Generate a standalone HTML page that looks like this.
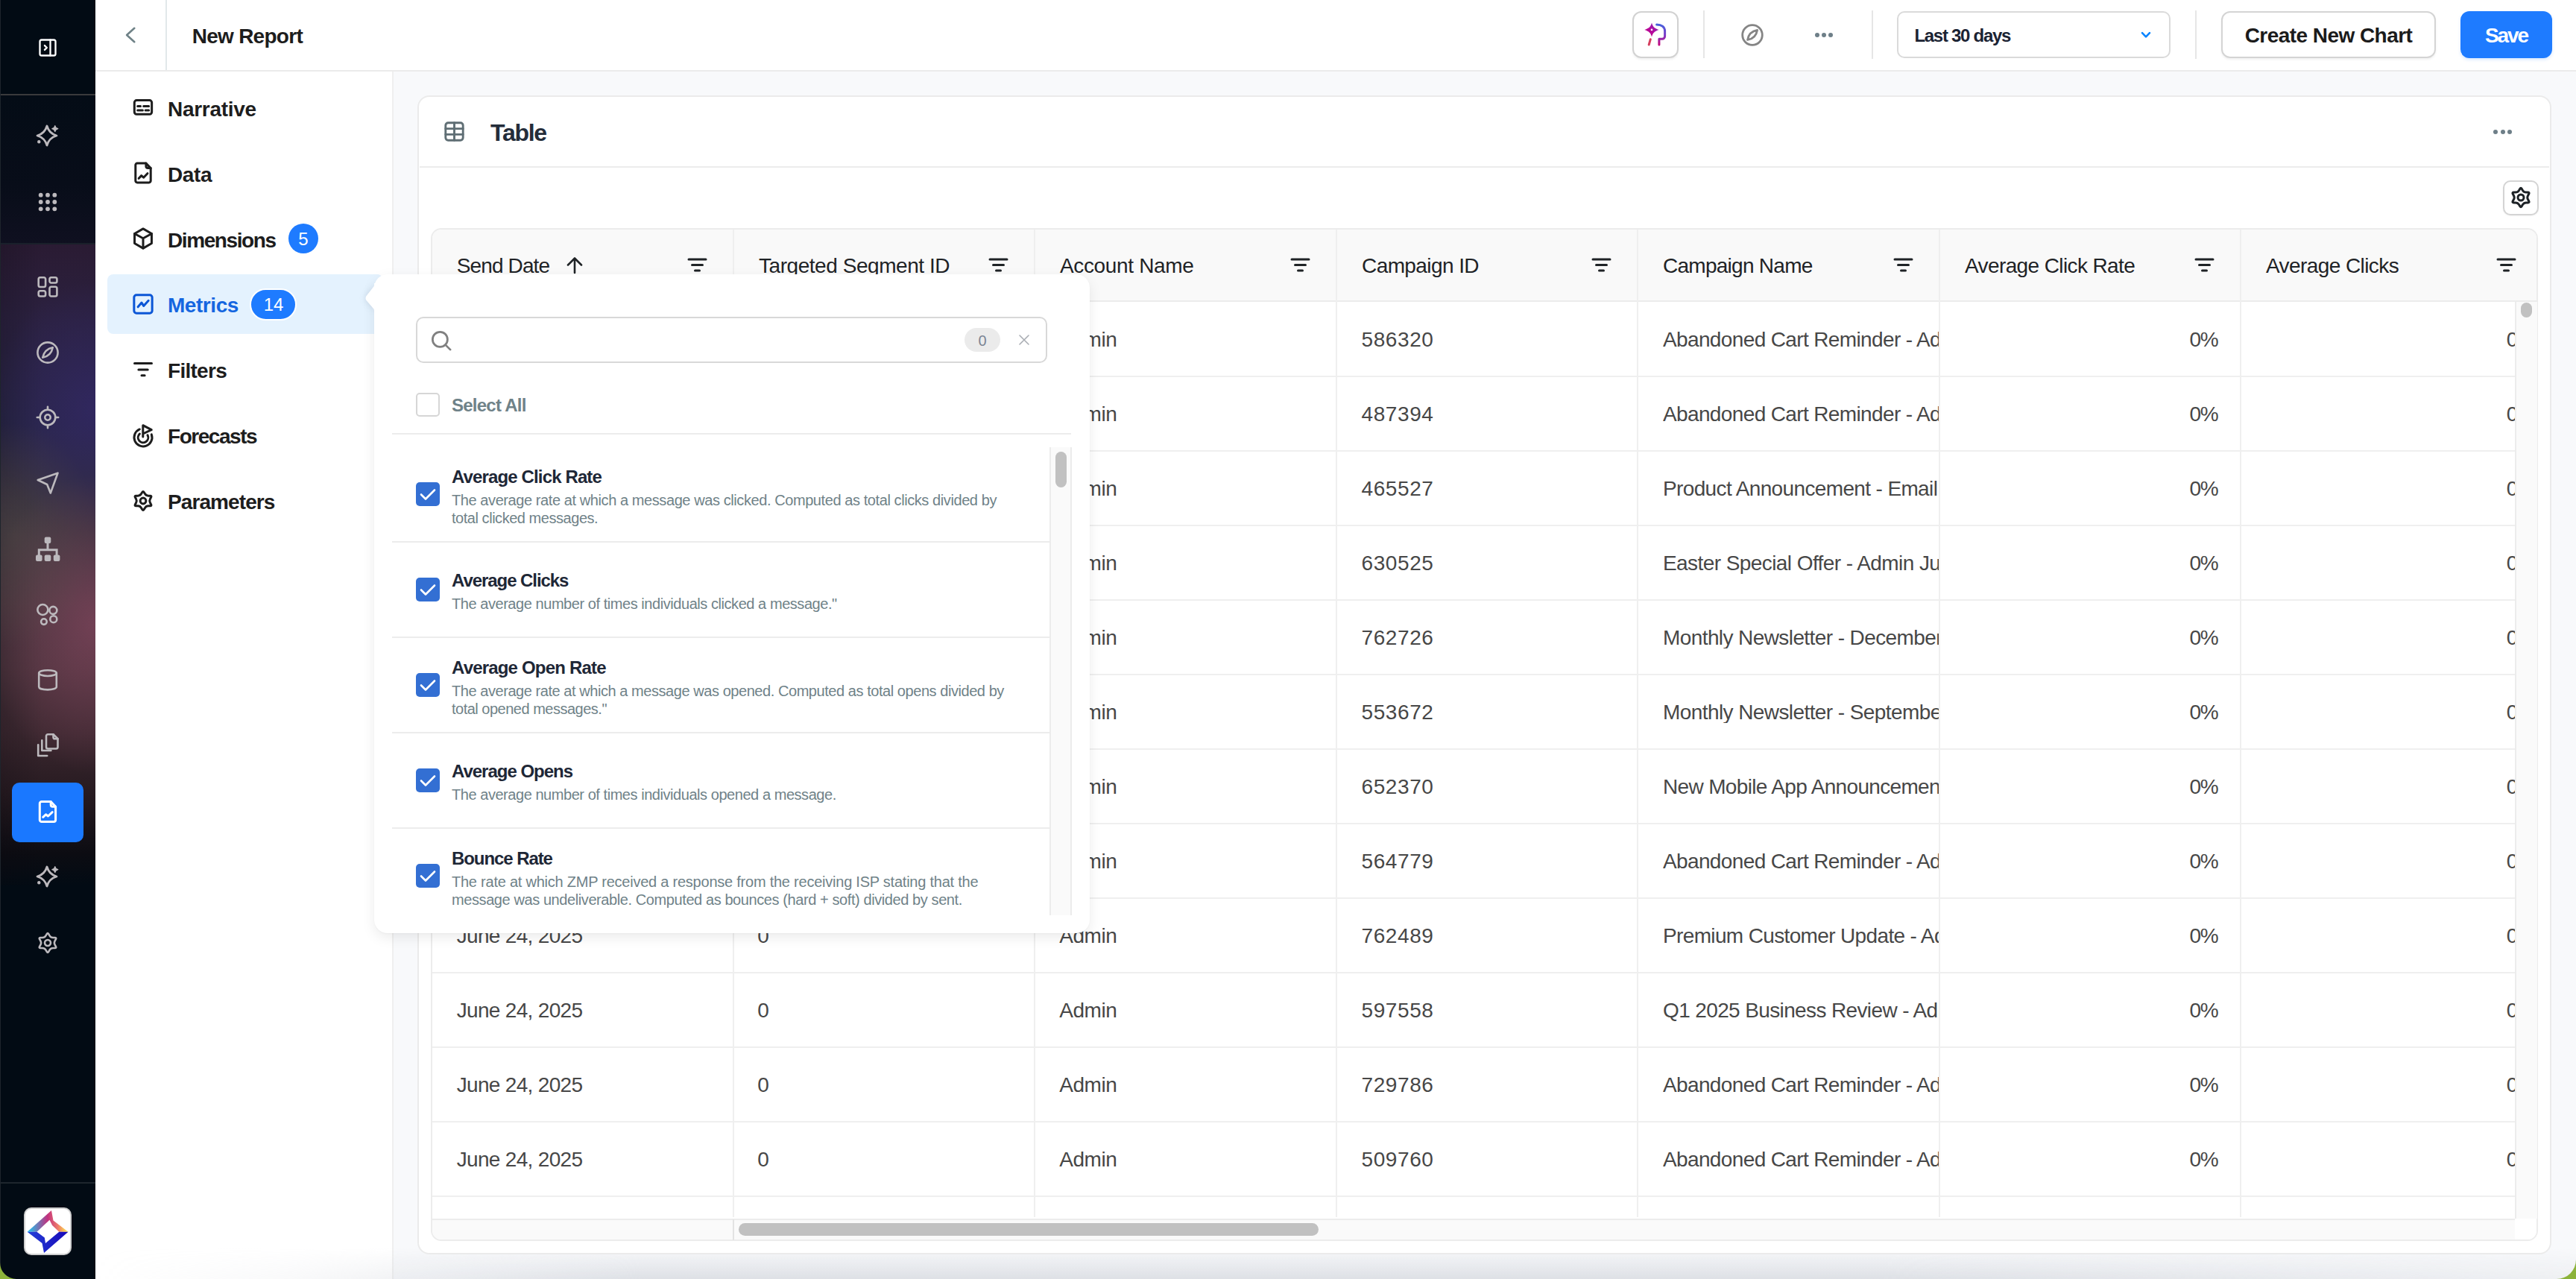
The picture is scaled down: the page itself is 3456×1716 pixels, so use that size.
<!DOCTYPE html>
<html><head><meta charset="utf-8"><title>New Report</title>
<style>
html,body{margin:0;padding:0;}
body{width:3456px;height:1716px;position:relative;overflow:hidden;background:#fff;font-family:"Liberation Sans",sans-serif;}
.t{position:absolute;white-space:nowrap;line-height:1;}
svg{overflow:visible;}
</style></head><body>
<div style="position:absolute;left:0px;top:0px;width:128px;height:1716px;background:#020b14;"></div>
<div style="position:absolute;left:0px;top:128px;width:128px;height:200px;background:linear-gradient(180deg,#040c16 0%,#080d19 60%,#0f1020 100%);"></div>
<div style="position:absolute;left:0px;top:328px;width:128px;height:860px;background:radial-gradient(ellipse 110px 150px at 20px 390px, rgba(95,82,75,0.45), rgba(95,82,75,0) 100%),radial-gradient(ellipse 150px 200px at 128px 510px, rgba(128,68,92,0.75), rgba(128,68,92,0) 100%),radial-gradient(ellipse 140px 170px at 128px 220px, rgba(52,40,105,0.7), rgba(52,40,105,0) 100%),linear-gradient(90deg, rgba(10,8,14,0.22) 0%, rgba(10,8,14,0) 45%),linear-gradient(180deg,#2a1b33 0%,#2b2140 12%,#282646 28%,#35303e 44%,#45363e 56%,#47323a 66%,#3c2830 76%,#261a20 86%,#0c0c12 95%,#020b14 100%);"></div>
<div style="position:absolute;left:0px;top:126px;width:128px;height:2px;background:#3a3a3c;"></div>
<div style="position:absolute;left:0px;top:326px;width:128px;height:2px;background:#1a202b;"></div>
<div style="position:absolute;left:0px;top:0px;width:1px;height:1716px;background:#1e252c;"></div>
<div style="position:absolute;left:0px;top:1586px;width:128px;height:2px;background:#1e262d;"></div>
<svg style="position:absolute;left:0px;top:1694px" width="22" height="22" viewBox="0 0 22 22"><path d="M0 0 V22 H22 A22 22 0 0 1 0 0Z" fill="#8cb33a"/></svg>
<svg style="position:absolute;left:50px;top:50px;" width="28" height="28" viewBox="0 0 24 24" fill="none" stroke="#ffffff" stroke-width="2" stroke-linecap="round" stroke-linejoin="round"><rect x="3" y="3" width="18" height="18" rx="2"/><path d="M15 3v18"/><path d="M8.5 9.5l2.5 2.5l-2.5 2.5"/></svg>
<svg style="position:absolute;left:43.3px;top:162px" width="40" height="40" viewBox="-20 -20 40 40" fill="none" stroke="#bcb9bd" stroke-width="2.8" stroke-linecap="round" stroke-linejoin="round"><path d="M0,-13 Q2.9,-2.9 13,0 Q2.9,2.9 0,13 Q-2.9,2.9 -13,0 Q-2.9,-2.9 0,-13Z"/><path d="M10.8,-13.3 Q11.4,-9.9 14.8,-9.3 Q11.4,-8.7 10.8,-5.3 Q10.2,-8.7 6.8,-9.3 Q10.2,-9.9 10.8,-13.3Z" fill="#bcb9bd" stroke-width="1.2"/><circle cx="-10.7" cy="8.2" r="1.6" fill="#bcb9bd" stroke-width="1.2"/></svg>
<svg style="position:absolute;left:43.9px;top:250.60000000000002px" width="40" height="40" viewBox="-20 -20 40 40" fill="none" stroke="#000" stroke-width="2.6" stroke-linecap="round" stroke-linejoin="round"><circle cx="-9.3" cy="-9.3" r="2.9" fill="#bcb9bd" stroke="none"/><circle cx="-9.3" cy="0" r="2.9" fill="#bcb9bd" stroke="none"/><circle cx="-9.3" cy="9.3" r="2.9" fill="#bcb9bd" stroke="none"/><circle cx="0" cy="-9.3" r="2.9" fill="#bcb9bd" stroke="none"/><circle cx="0" cy="0" r="2.9" fill="#bcb9bd" stroke="none"/><circle cx="0" cy="9.3" r="2.9" fill="#bcb9bd" stroke="none"/><circle cx="9.3" cy="-9.3" r="2.9" fill="#bcb9bd" stroke="none"/><circle cx="9.3" cy="0" r="2.9" fill="#bcb9bd" stroke="none"/><circle cx="9.3" cy="9.3" r="2.9" fill="#bcb9bd" stroke="none"/></svg>
<svg style="position:absolute;left:44px;top:365px" width="40" height="40" viewBox="-20 -20 40 40" fill="none" stroke="#bcb9bd" stroke-width="2.6" stroke-linecap="round" stroke-linejoin="round"><rect x="-12.3" y="-12.8" width="9.4" height="12.8" rx="2.2"/><rect x="2.5" y="-12.8" width="9.9" height="7.3" rx="2.2"/><rect x="-12.3" y="5.3" width="9.4" height="7.2" rx="2.2"/><rect x="2.5" y="-0.2" width="9.9" height="12.7" rx="2.2"/></svg>
<svg style="position:absolute;left:44px;top:453px" width="40" height="40" viewBox="-20 -20 40 40" fill="none" stroke="#bcb9bd" stroke-width="2.6" stroke-linecap="round" stroke-linejoin="round"><circle cx="0" cy="0" r="13.6"/><path d="M-6.8,6.8 Q-4.5,-4.5 6.8,-6.8 Q4.5,4.5 -6.8,6.8Z"/></svg>
<svg style="position:absolute;left:44px;top:540px" width="40" height="40" viewBox="-20 -20 40 40" fill="none" stroke="#bcb9bd" stroke-width="2.6" stroke-linecap="round" stroke-linejoin="round"><circle cx="0" cy="0" r="3.7"/><circle cx="0" cy="0" r="10.3"/><path d="M0,-14.2v3.5M0,10.7v3.5M-14.2,0h3.5M10.7,0h3.5"/></svg>
<svg style="position:absolute;left:44px;top:628px" width="40" height="40" viewBox="-20 -20 40 40" fill="none" stroke="#bcb9bd" stroke-width="2.6" stroke-linecap="round" stroke-linejoin="round"><path d="M-13.3,-4 L13.5,-13.3 L3.8,13.5 L-0.8,2 Z"/></svg>
<svg style="position:absolute;left:44px;top:717px" width="40" height="40" viewBox="-20 -20 40 40" fill="none" stroke="#bcb9bd" stroke-width="2.6" stroke-linecap="round" stroke-linejoin="round"><rect x="-4.3" y="-16.6" width="8.6" height="8.6" rx="2" fill="#bcb9bd" stroke="none"/><rect x="-16" y="7.5" width="8.6" height="8.6" rx="2" fill="#bcb9bd" stroke="none"/><rect x="-4.3" y="7.5" width="8.6" height="8.6" rx="2" fill="#bcb9bd" stroke="none"/><rect x="7.8" y="7.5" width="8.6" height="8.6" rx="2" fill="#bcb9bd" stroke="none"/><path d="M0,-9v10M-11.7,8v-7.2H12.1V8" stroke-width="3" stroke-linecap="butt" stroke-linejoin="miter"/></svg>
<svg style="position:absolute;left:44px;top:804px" width="40" height="40" viewBox="-20 -20 40 40" fill="none" stroke="#bcb9bd" stroke-width="2.6" stroke-linecap="round" stroke-linejoin="round"><circle cx="-6.65" cy="-6" r="7.0"/><circle cx="7.35" cy="-5.1" r="5.0"/><circle cx="-5.1" cy="10.1" r="3.8"/><circle cx="7.8" cy="6.7" r="4.5"/></svg>
<svg style="position:absolute;left:44px;top:892px" width="40" height="40" viewBox="-20 -20 40 40" fill="none" stroke="#bcb9bd" stroke-width="2.6" stroke-linecap="round" stroke-linejoin="round"><ellipse cx="0" cy="-8.9" rx="11.8" ry="3.9"/><path d="M-11.8,-8.9 V9.5 C-11.8,11.8 -6.5,13.4 0,13.4 C6.5,13.4 11.8,11.8 11.8,9.5 V-8.9"/></svg>
<svg style="position:absolute;left:44px;top:980px" width="40" height="40" viewBox="-20 -20 40 40" fill="none" stroke="#bcb9bd" stroke-width="2.6" stroke-linecap="round" stroke-linejoin="round"><path d="M-2,-12.5 A2.3,2.3 0 0 1 0.3,-14.8 H7.5 L13.5,-8.8 V2.2 A2.3,2.3 0 0 1 11.2,4.5 H0.3 A2.3,2.3 0 0 1 -2,2.2 Z"/><path d="M7.5,-14.8 V-11.1 A2.3,2.3 0 0 0 9.8,-8.8 H13.5"/><path d="M-7.7,-6.7 V7 H4.4"/><path d="M-12.8,-0.7 V14 H-0.8"/></svg>
<div style="position:absolute;left:16px;top:1050px;width:96px;height:80px;background:#1a78ff;border-radius:10px;"></div>
<svg style="position:absolute;left:44px;top:1069px" width="40" height="40" viewBox="-20 -20 40 40" fill="none" stroke="#ffffff" stroke-width="3" stroke-linecap="round" stroke-linejoin="round"><path d="M-10.7,-11 A2.5,2.5 0 0 1 -8.2,-13.5 H4.2 L10.6,-6.8 V11 A2.5,2.5 0 0 1 8.1,13.5 H-8.2 A2.5,2.5 0 0 1 -10.7,11 Z"/><path d="M4.2,-13.5 V-9.2 A2.4,2.4 0 0 0 6.6,-6.8 H10.6"/><path d="M-6.3,7.3 L-2.5,3.8 L0.5,6 L6.2,0.6"/></svg>
<svg style="position:absolute;left:43.3px;top:1156.3px" width="40" height="40" viewBox="-20 -20 40 40" fill="none" stroke="#bcb9bd" stroke-width="2.8" stroke-linecap="round" stroke-linejoin="round"><path d="M0,-13 Q2.9,-2.9 13,0 Q2.9,2.9 0,13 Q-2.9,2.9 -13,0 Q-2.9,-2.9 0,-13Z"/><path d="M10.8,-13.3 Q11.4,-9.9 14.8,-9.3 Q11.4,-8.7 10.8,-5.3 Q10.2,-8.7 6.8,-9.3 Q10.2,-9.9 10.8,-13.3Z" fill="#bcb9bd" stroke-width="1.2"/><circle cx="-10.7" cy="8.2" r="1.6" fill="#bcb9bd" stroke-width="1.2"/></svg>
<svg style="position:absolute;left:43.9px;top:1244.7px" width="40" height="40" viewBox="-20 -20 40 40" fill="none" stroke="#bcb9bd" stroke-width="2.6" stroke-linecap="round" stroke-linejoin="round"><path d="M-1.23,-11.83 Q0.00,-13.86 1.23,-11.83 L2.54,-9.66 Q4.09,-7.09 7.10,-7.03 L9.63,-6.98 Q12.00,-6.93 10.86,-4.85 L9.64,-2.63 Q8.19,0.00 9.64,2.63 L10.86,4.85 Q12.00,6.93 9.63,6.98 L7.10,7.03 Q4.09,7.09 2.54,9.66 L1.23,11.83 Q0.00,13.86 -1.23,11.83 L-2.54,9.66 Q-4.09,7.09 -7.10,7.03 L-9.63,6.98 Q-12.00,6.93 -10.86,4.85 L-9.64,2.63 Q-8.19,0.00 -9.64,-2.63 L-10.86,-4.85 Q-12.00,-6.93 -9.63,-6.98 L-7.10,-7.03 Q-4.09,-7.09 -2.54,-9.66 Z"/><circle cx="0" cy="0" r="4.0"/></svg>
<div style="position:absolute;left:32px;top:1620px;width:64px;height:64px;background:#fff;border:2px solid #cfcfcf;border-radius:10px;box-sizing:border-box;"></div>
<svg style="position:absolute;left:32px;top:1620px" width="64" height="64" viewBox="32 1620 64 64">
<defs><linearGradient id="lg1" gradientUnits="userSpaceOnUse" x1="37" y1="0" x2="91" y2="0"><stop offset="0" stop-color="#18c8f4"/><stop offset=".5" stop-color="#c2307e"/><stop offset=".75" stop-color="#ee7a6a"/><stop offset="1" stop-color="#fff24a"/></linearGradient>
<linearGradient id="lg2" gradientUnits="userSpaceOnUse" x1="37" y1="0" x2="91" y2="0"><stop offset="0" stop-color="#2440d8"/><stop offset="1" stop-color="#1808b8"/></linearGradient></defs>
<path d="M36.6 1652.7 L69 1624 L71.5 1637.5 L91.5 1652.7 L79.3 1652.7 L70.1 1644 L66.5 1636.8 L49.4 1652.7 Z" fill="url(#lg1)"/>
<path d="M36.6 1652.7 L49.4 1652.7 L59.8 1660.5 L61 1668 L79.3 1652.7 L91.5 1652.7 L59 1681 L56.5 1668 Z" fill="url(#lg2)"/>
</svg>
<div style="position:absolute;left:128px;top:0px;width:3328px;height:94px;background:#ffffff;"></div>
<div style="position:absolute;left:128px;top:94px;width:3328px;height:2px;background:#ebebeb;"></div>
<div style="position:absolute;left:222px;top:0px;width:2px;height:94px;background:#e2e8ea;"></div>
<svg style="position:absolute;left:155px;top:27px" width="40" height="40" viewBox="-20 -20 40 40" fill="none" stroke="#6f8287" stroke-width="2.6" stroke-linecap="round" stroke-linejoin="round"><path d="M5.3,-9.2 L-4.9,0 L5.3,9.2"/></svg>
<span class="t" style="left:257.70px;top:34.50px;font-size:28px;font-weight:700;color:#1d1d1d;letter-spacing:-0.728px;">New Report</span>
<div style="position:absolute;left:2190px;top:15px;width:62px;height:63px;background:#fff;border:2px solid #d2d2d2;border-radius:12px;box-sizing:border-box;box-shadow:0 2px 3px rgba(0,0,0,0.06);"></div>
<svg style="position:absolute;left:2195px;top:20px" width="52" height="52" viewBox="2195 20 52 52">
<defs><linearGradient id="aig" x1="1" y1="0" x2="0" y2="1"><stop offset="0" stop-color="#7c30c0"/><stop offset=".55" stop-color="#b6089c"/><stop offset="1" stop-color="#c0067f"/></linearGradient>
<linearGradient id="aig2" x1="0" y1="0" x2="0" y2="1"><stop offset="0" stop-color="#4860dc"/><stop offset=".5" stop-color="#7a3cc8"/><stop offset="1" stop-color="#c4067c"/></linearGradient></defs>
<path d="M2216 30.4 C2217.3 35.5 2219.5 37.8 2225.5 39.9 C2219.5 42 2217.3 44.3 2216 49.5 C2214.7 44.3 2212.5 42 2206.3 39.9 C2212.5 37.8 2214.7 35.5 2216 30.4Z" fill="url(#aig)"/>
<circle cx="2216" cy="39.9" r="1.3" fill="#fff"/>
<path d="M2222.6 33 C2229 33 2233.6 36 2233.6 42 V48.5 C2233.6 50.5 2232 52.3 2230 52.3 H2225.9 V60" fill="none" stroke="url(#aig2)" stroke-width="3" stroke-linecap="round" stroke-linejoin="round"/>
<path d="M2214.3 52.7 L2212.2 60" stroke="#d6405f" stroke-width="3" stroke-linecap="round"/>
</svg>
<div style="position:absolute;left:2285px;top:14px;width:2px;height:64px;background:#e6e6e6;"></div>
<svg style="position:absolute;left:2330.9px;top:26.9px" width="40" height="40" viewBox="-20 -20 40 40" fill="none" stroke="#858585" stroke-width="2.8" stroke-linecap="round" stroke-linejoin="round"><circle cx="0" cy="0" r="13.3"/><path d="M-6.4,6.4 Q-4.6,-4.6 6.6,-6.6 Q4.6,4.6 -6.4,6.4Z"/></svg>
<div style="position:absolute;left:2434.5px;top:44px;width:6px;height:6px;background:#6e7f88;border-radius:50%;"></div>
<div style="position:absolute;left:2443.8px;top:44px;width:6px;height:6px;background:#6e7f88;border-radius:50%;"></div>
<div style="position:absolute;left:2453.2px;top:44px;width:6px;height:6px;background:#6e7f88;border-radius:50%;"></div>
<div style="position:absolute;left:2511px;top:14px;width:2px;height:65px;background:#e6e6e6;"></div>
<div style="position:absolute;left:2545px;top:15px;width:367px;height:63px;background:#fff;border:2px solid #dadada;border-radius:10px;box-sizing:border-box;"></div>
<span class="t" style="left:2568.40px;top:35.58px;font-size:24px;font-weight:700;color:#1b2333;letter-spacing:-1.283px;">Last 30 days</span>
<svg style="position:absolute;left:2870px;top:38px;" width="18" height="18" viewBox="0 0 18 18" fill="none" stroke="#0a84ff" stroke-width="2.6" stroke-linecap="round" stroke-linejoin="round"><path d="M4 6.2L9 11.3L14 6.2"/></svg>
<div style="position:absolute;left:2945px;top:14px;width:2px;height:65px;background:#e6e6e6;"></div>
<div style="position:absolute;left:2980px;top:15px;width:288px;height:63px;background:#fff;border:2px solid #d4d4d4;border-radius:12px;box-sizing:border-box;box-shadow:0 2px 3px rgba(0,0,0,0.06);"></div>
<span class="t" style="left:3011.70px;top:33.60px;font-size:28px;font-weight:700;color:#1b1b1b;letter-spacing:-0.550px;">Create New Chart</span>
<div style="position:absolute;left:3301px;top:15px;width:123px;height:63px;background:#1e7bff;border-radius:12px;box-shadow:0 2px 4px rgba(30,123,255,0.18);"></div>
<span class="t" style="left:3334.00px;top:33.60px;font-size:28px;font-weight:700;color:#ffffff;letter-spacing:-2.102px;">Save</span>
<div style="position:absolute;left:128px;top:96px;width:399px;height:1620px;background:#ffffff;"></div>
<div style="position:absolute;left:526px;top:96px;width:2px;height:1620px;background:#efefef;"></div>
<div style="position:absolute;left:144px;top:368px;width:370px;height:80px;background:#e4f2fe;border-radius:8px;"></div>
<svg style="position:absolute;left:172px;top:123.9px" width="40" height="40" viewBox="-20 -20 40 40" fill="none" stroke="#1d1d1d" stroke-width="3" stroke-linecap="round" stroke-linejoin="round"><rect x="-11.7" y="-9.4" width="23.35" height="18.75" rx="3"/><path d="M-7.35,-1.4h3.85M0.65,-1.4h7M-7.35,4.1h6.75M3.15,4.1h4.5"/></svg>
<span class="t" style="left:225.00px;top:132.80px;font-size:28px;font-weight:700;color:#1d1d1d;letter-spacing:-0.278px;">Narrative</span>
<svg style="position:absolute;left:172px;top:211.7px" width="40" height="40" viewBox="-20 -20 40 40" fill="none" stroke="#1d1d1d" stroke-width="3" stroke-linecap="round" stroke-linejoin="round"><path d="M-10.2,-10.6 A2.3,2.3 0 0 1 -7.9,-12.9 H3.9 L10.2,-6.4 V10.6 A2.3,2.3 0 0 1 7.9,12.9 H-7.9 A2.3,2.3 0 0 1 -10.2,10.6 Z"/><path d="M3.9,-12.9 V-8.7 A2.3,2.3 0 0 0 6.2,-6.4 H10.2"/><path d="M-5.8,7.3 L-2.3,3.6 L0.6,6.2 L5.9,0.7"/></svg>
<span class="t" style="left:225.00px;top:220.80px;font-size:28px;font-weight:700;color:#1d1d1d;letter-spacing:-0.376px;">Data</span>
<svg style="position:absolute;left:172px;top:300px" width="40" height="40" viewBox="-20 -20 40 40" fill="none" stroke="#1d1d1d" stroke-width="3" stroke-linecap="round" stroke-linejoin="round"><path d="M0,-13.1 L11.45,-6.5 V6.5 L0,13.1 L-11.45,6.5 V-6.5 Z"/><path d="M-11.45,-6.5 L0,-0.3 L11.45,-6.5 M0,-0.3 V13.1"/></svg>
<span class="t" style="left:225.00px;top:308.80px;font-size:28px;font-weight:700;color:#1d1d1d;letter-spacing:-1.400px;">Dimensions</span>
<svg style="position:absolute;left:172px;top:388px" width="40" height="40" viewBox="-20 -20 40 40" fill="none" stroke="#0b56d6" stroke-width="3" stroke-linecap="round" stroke-linejoin="round"><rect x="-12.15" y="-12.25" width="24.3" height="24.5" rx="3.2"/><path d="M-6.9,3.8 L-2,-1.9 L0.7,2.4 L7.2,-4.7"/></svg>
<span class="t" style="left:225.00px;top:395.80px;font-size:28px;font-weight:700;color:#1466e0;letter-spacing:-0.450px;">Metrics</span>
<svg style="position:absolute;left:172px;top:476px" width="40" height="40" viewBox="-20 -20 40 40" fill="none" stroke="#1d1d1d" stroke-width="3" stroke-linecap="round" stroke-linejoin="round"><path d="M-11.5,-8.4h23M-6.1,0h12.3M-2,7.8h4.1"/></svg>
<span class="t" style="left:225.00px;top:483.80px;font-size:28px;font-weight:700;color:#1d1d1d;letter-spacing:-0.719px;">Filters</span>
<svg style="position:absolute;left:172px;top:566.5px" width="40" height="40" viewBox="-20 -20 40 40" fill="none" stroke="#1d1d1d" stroke-width="3" stroke-linecap="round" stroke-linejoin="round"><path d="M-4.69,-11.05 A12,12 0 1 0 11.28,-4.10"/><path d="M-4.64,-4.97 A6.8,6.8 0 1 0 6.00,-3.19"/><path d="M-0.2,-0.9 V-16.3 L11.2,-10.3 L-0.2,-5"/></svg>
<span class="t" style="left:225.00px;top:571.80px;font-size:28px;font-weight:700;color:#1d1d1d;letter-spacing:-1.455px;">Forecasts</span>
<svg style="position:absolute;left:172px;top:651.5px" width="40" height="40" viewBox="-20 -20 40 40" fill="none" stroke="#1d1d1d" stroke-width="3" stroke-linecap="round" stroke-linejoin="round"><path d="M-1.20,-11.55 Q0.00,-13.53 1.20,-11.55 L2.48,-9.44 Q4.00,-6.93 6.93,-6.87 L9.40,-6.82 Q11.72,-6.76 10.60,-4.74 L9.42,-2.57 Q8.00,0.00 9.42,2.57 L10.60,4.74 Q11.72,6.76 9.40,6.82 L6.93,6.87 Q4.00,6.93 2.48,9.44 L1.20,11.55 Q0.00,13.53 -1.20,11.55 L-2.48,9.44 Q-4.00,6.93 -6.93,6.87 L-9.40,6.82 Q-11.72,6.76 -10.60,4.74 L-9.42,2.57 Q-8.00,0.00 -9.42,-2.57 L-10.60,-4.74 Q-11.72,-6.77 -9.40,-6.82 L-6.93,-6.87 Q-4.00,-6.93 -2.48,-9.44 Z"/><circle cx="0" cy="0" r="3.9"/></svg>
<span class="t" style="left:225.00px;top:659.80px;font-size:28px;font-weight:700;color:#1d1d1d;letter-spacing:-0.906px;">Parameters</span>
<div style="position:absolute;left:387px;top:300px;width:40px;height:40px;background:#1e7bff;border-radius:50%;"></div>
<span class="t" style="left:400.32px;top:309.18px;font-size:24px;font-weight:400;color:#ffffff;letter-spacing:0.000px;">5</span>
<div style="position:absolute;left:334.5px;top:386.5px;width:63px;height:43px;background:#1e7bff;border-radius:21.5px;border:2px solid #ffffff;box-sizing:border-box;"></div>
<span class="t" style="left:353.65px;top:396.68px;font-size:24px;font-weight:400;color:#ffffff;letter-spacing:0.000px;">14</span>
<div style="position:absolute;left:528px;top:96px;width:2928px;height:1620px;background:#f8f9fb;"></div>
<div style="position:absolute;left:128px;top:1640px;width:3328px;height:76px;background:linear-gradient(180deg,rgba(200,204,212,0) 0%,rgba(200,204,212,0) 45%,rgba(200,204,212,0.55) 100%);-webkit-mask-image:linear-gradient(90deg,rgba(0,0,0,0) 0%,rgba(0,0,0,0.2) 8%,rgba(0,0,0,1) 22%,rgba(0,0,0,1) 72%,rgba(0,0,0,0.35) 100%);"></div>
<div style="position:absolute;left:560px;top:128px;width:2863px;height:1555px;background:#fff;border:2px solid #ebebeb;border-radius:16px;box-sizing:border-box;"></div>
<div style="position:absolute;left:563px;top:223px;width:2857px;height:2px;background:#ececec;"></div>
<svg style="position:absolute;left:593px;top:160px;" width="33" height="33" viewBox="0 0 24 24" fill="none" stroke="#5f6e74" stroke-width="2.1" stroke-linecap="round" stroke-linejoin="round"><rect x="3.5" y="3.5" width="17" height="17" rx="2.5"/><path d="M3.5 9.2h17M3.5 14.8h17M12 3.5v17"/></svg>
<span class="t" style="left:658.10px;top:161.71px;font-size:32px;font-weight:700;color:#242d3a;letter-spacing:-1.321px;">Table</span>
<div style="position:absolute;left:3345px;top:174px;width:6px;height:6px;background:#6e7f88;border-radius:50%;"></div>
<div style="position:absolute;left:3354.5px;top:174px;width:6px;height:6px;background:#6e7f88;border-radius:50%;"></div>
<div style="position:absolute;left:3364px;top:174px;width:6px;height:6px;background:#6e7f88;border-radius:50%;"></div>
<div style="position:absolute;left:3358px;top:242px;width:48px;height:47px;background:#fff;border:2px solid #d4d4d4;border-radius:10px;box-sizing:border-box;box-shadow:0 1px 2px rgba(0,0,0,0.05);"></div>
<svg style="position:absolute;left:3362px;top:245.3px" width="40" height="40" viewBox="-20 -20 40 40" fill="none" stroke="#1d2226" stroke-width="3" stroke-linecap="round" stroke-linejoin="round"><path d="M-1.21,-11.65 Q0.00,-13.64 1.21,-11.65 L2.51,-9.53 Q4.05,-7.01 7.00,-6.94 L9.48,-6.88 Q11.81,-6.82 10.70,-4.77 L9.51,-2.59 Q8.10,0.00 9.51,2.59 L10.70,4.77 Q11.81,6.82 9.48,6.88 L7.00,6.94 Q4.05,7.01 2.51,9.53 L1.21,11.65 Q0.00,13.64 -1.21,11.65 L-2.51,9.53 Q-4.05,7.01 -7.00,6.94 L-9.48,6.88 Q-11.81,6.82 -10.70,4.77 L-9.51,2.59 Q-8.10,0.00 -9.51,-2.59 L-10.70,-4.77 Q-11.81,-6.82 -9.48,-6.88 L-7.00,-6.94 Q-4.05,-7.01 -2.51,-9.53 Z"/><circle cx="0" cy="0" r="4.0"/></svg>
<div style="position:absolute;left:578px;top:306px;width:2827px;height:1359px;background:#fff;border:2px solid #ececec;border-radius:14px;box-sizing:border-box;overflow:hidden;"></div>
<div style="position:absolute;left:580px;top:308px;width:2823px;height:95px;background:#f9f9f9;border-radius:12px 12px 0 0;"></div>
<div style="position:absolute;left:580px;top:403px;width:2823px;height:2px;background:#ececec;"></div>
<div style="position:absolute;left:983px;top:308px;width:2px;height:1325px;background:#efefef;"></div>
<div style="position:absolute;left:1387px;top:308px;width:2px;height:1325px;background:#efefef;"></div>
<div style="position:absolute;left:1792px;top:308px;width:2px;height:1325px;background:#efefef;"></div>
<div style="position:absolute;left:2196px;top:308px;width:2px;height:1325px;background:#efefef;"></div>
<div style="position:absolute;left:2601px;top:308px;width:2px;height:1325px;background:#efefef;"></div>
<div style="position:absolute;left:3005px;top:308px;width:2px;height:1325px;background:#efefef;"></div>
<span class="t" style="left:612.80px;top:343.10px;font-size:28px;font-weight:400;color:#1f2326;letter-spacing:-0.881px;">Send Date</span>
<svg style="position:absolute;left:921.5px;top:345px;" width="27" height="21" viewBox="0 0 27 21" fill="none" stroke="#1f2326" stroke-width="3" stroke-linecap="round" stroke-linejoin="round"><path d="M2 3h23M6.5 10.5h14M10.5 18h6"/></svg>
<span class="t" style="left:1018.00px;top:343.10px;font-size:28px;font-weight:400;color:#1f2326;letter-spacing:-0.452px;">Targeted Segment ID</span>
<svg style="position:absolute;left:1325.5px;top:345px;" width="27" height="21" viewBox="0 0 27 21" fill="none" stroke="#1f2326" stroke-width="3" stroke-linecap="round" stroke-linejoin="round"><path d="M2 3h23M6.5 10.5h14M10.5 18h6"/></svg>
<span class="t" style="left:1422.00px;top:343.10px;font-size:28px;font-weight:400;color:#1f2326;letter-spacing:-0.353px;">Account Name</span>
<svg style="position:absolute;left:1730.5px;top:345px;" width="27" height="21" viewBox="0 0 27 21" fill="none" stroke="#1f2326" stroke-width="3" stroke-linecap="round" stroke-linejoin="round"><path d="M2 3h23M6.5 10.5h14M10.5 18h6"/></svg>
<span class="t" style="left:1827.00px;top:343.10px;font-size:28px;font-weight:400;color:#1f2326;letter-spacing:-0.582px;">Campaign ID</span>
<svg style="position:absolute;left:2134.5px;top:345px;" width="27" height="21" viewBox="0 0 27 21" fill="none" stroke="#1f2326" stroke-width="3" stroke-linecap="round" stroke-linejoin="round"><path d="M2 3h23M6.5 10.5h14M10.5 18h6"/></svg>
<span class="t" style="left:2231.00px;top:343.10px;font-size:28px;font-weight:400;color:#1f2326;letter-spacing:-0.731px;">Campaign Name</span>
<svg style="position:absolute;left:2539.5px;top:345px;" width="27" height="21" viewBox="0 0 27 21" fill="none" stroke="#1f2326" stroke-width="3" stroke-linecap="round" stroke-linejoin="round"><path d="M2 3h23M6.5 10.5h14M10.5 18h6"/></svg>
<span class="t" style="left:2636.00px;top:343.10px;font-size:28px;font-weight:400;color:#1f2326;letter-spacing:-0.609px;">Average Click Rate</span>
<svg style="position:absolute;left:2943.5px;top:345px;" width="27" height="21" viewBox="0 0 27 21" fill="none" stroke="#1f2326" stroke-width="3" stroke-linecap="round" stroke-linejoin="round"><path d="M2 3h23M6.5 10.5h14M10.5 18h6"/></svg>
<span class="t" style="left:3040.00px;top:343.10px;font-size:28px;font-weight:400;color:#1f2326;letter-spacing:-0.581px;">Average Clicks</span>
<svg style="position:absolute;left:3348.5px;top:345px;" width="27" height="21" viewBox="0 0 27 21" fill="none" stroke="#1f2326" stroke-width="3" stroke-linecap="round" stroke-linejoin="round"><path d="M2 3h23M6.5 10.5h14M10.5 18h6"/></svg>
<svg style="position:absolute;left:758px;top:343px;" width="26" height="26" viewBox="0 0 26 26" fill="none" stroke="#1f2326" stroke-width="2.6" stroke-linecap="round" stroke-linejoin="round"><path d="M13 23V4M4 12.5l9-9l9 9"/></svg>
<span class="t" style="left:612.80px;top:442.30px;font-size:28px;font-weight:400;color:#474747;letter-spacing:-0.692px;">June 24, 2025</span>
<span class="t" style="left:1016.30px;top:442.30px;font-size:28px;font-weight:400;color:#474747;letter-spacing:0.722px;">0</span>
<span class="t" style="left:1421.20px;top:442.30px;font-size:28px;font-weight:400;color:#474747;letter-spacing:-0.435px;">Admin</span>
<span class="t" style="left:1826.50px;top:442.30px;font-size:28px;font-weight:400;color:#474747;letter-spacing:0.594px;">586320</span>
<span class="t" style="left:2231.00px;top:442.30px;font-size:28px;font-weight:400;color:#474747;letter-spacing:-0.630px;width:370.00px;overflow:hidden;white-space:nowrap;">Abandoned Cart Reminder - Admin June</span>
<span class="t" style="left:2937.60px;top:442.30px;font-size:28px;font-weight:400;color:#474747;letter-spacing:-1.534px;">0%</span>
<span class="t" style="left:3362.70px;top:442.30px;font-size:28px;font-weight:400;color:#474747;letter-spacing:0.722px;width:12.30px;overflow:hidden;white-space:nowrap;">0</span>
<div style="position:absolute;left:580px;top:504px;width:2795px;height:2px;background:#efefef;"></div>
<span class="t" style="left:612.80px;top:542.30px;font-size:28px;font-weight:400;color:#474747;letter-spacing:-0.692px;">June 24, 2025</span>
<span class="t" style="left:1016.30px;top:542.30px;font-size:28px;font-weight:400;color:#474747;letter-spacing:0.722px;">0</span>
<span class="t" style="left:1421.20px;top:542.30px;font-size:28px;font-weight:400;color:#474747;letter-spacing:-0.435px;">Admin</span>
<span class="t" style="left:1826.50px;top:542.30px;font-size:28px;font-weight:400;color:#474747;letter-spacing:0.594px;">487394</span>
<span class="t" style="left:2231.00px;top:542.30px;font-size:28px;font-weight:400;color:#474747;letter-spacing:-0.630px;width:370.00px;overflow:hidden;white-space:nowrap;">Abandoned Cart Reminder - Admin June</span>
<span class="t" style="left:2937.60px;top:542.30px;font-size:28px;font-weight:400;color:#474747;letter-spacing:-1.534px;">0%</span>
<span class="t" style="left:3362.70px;top:542.30px;font-size:28px;font-weight:400;color:#474747;letter-spacing:0.722px;width:12.30px;overflow:hidden;white-space:nowrap;">0</span>
<div style="position:absolute;left:580px;top:604px;width:2795px;height:2px;background:#efefef;"></div>
<span class="t" style="left:612.80px;top:642.30px;font-size:28px;font-weight:400;color:#474747;letter-spacing:-0.692px;">June 24, 2025</span>
<span class="t" style="left:1016.30px;top:642.30px;font-size:28px;font-weight:400;color:#474747;letter-spacing:0.722px;">0</span>
<span class="t" style="left:1421.20px;top:642.30px;font-size:28px;font-weight:400;color:#474747;letter-spacing:-0.435px;">Admin</span>
<span class="t" style="left:1826.50px;top:642.30px;font-size:28px;font-weight:400;color:#474747;letter-spacing:0.594px;">465527</span>
<span class="t" style="left:2231.00px;top:642.30px;font-size:28px;font-weight:400;color:#474747;letter-spacing:-0.634px;width:370.00px;overflow:hidden;white-space:nowrap;">Product Announcement - Email Campaign</span>
<span class="t" style="left:2937.60px;top:642.30px;font-size:28px;font-weight:400;color:#474747;letter-spacing:-1.534px;">0%</span>
<span class="t" style="left:3362.70px;top:642.30px;font-size:28px;font-weight:400;color:#474747;letter-spacing:0.722px;width:12.30px;overflow:hidden;white-space:nowrap;">0</span>
<div style="position:absolute;left:580px;top:704px;width:2795px;height:2px;background:#efefef;"></div>
<span class="t" style="left:612.80px;top:742.30px;font-size:28px;font-weight:400;color:#474747;letter-spacing:-0.692px;">June 24, 2025</span>
<span class="t" style="left:1016.30px;top:742.30px;font-size:28px;font-weight:400;color:#474747;letter-spacing:0.722px;">0</span>
<span class="t" style="left:1421.20px;top:742.30px;font-size:28px;font-weight:400;color:#474747;letter-spacing:-0.435px;">Admin</span>
<span class="t" style="left:1826.50px;top:742.30px;font-size:28px;font-weight:400;color:#474747;letter-spacing:0.594px;">630525</span>
<span class="t" style="left:2231.00px;top:742.30px;font-size:28px;font-weight:400;color:#474747;letter-spacing:-0.574px;width:370.00px;overflow:hidden;white-space:nowrap;">Easter Special Offer - Admin June</span>
<span class="t" style="left:2937.60px;top:742.30px;font-size:28px;font-weight:400;color:#474747;letter-spacing:-1.534px;">0%</span>
<span class="t" style="left:3362.70px;top:742.30px;font-size:28px;font-weight:400;color:#474747;letter-spacing:0.722px;width:12.30px;overflow:hidden;white-space:nowrap;">0</span>
<div style="position:absolute;left:580px;top:804px;width:2795px;height:2px;background:#efefef;"></div>
<span class="t" style="left:612.80px;top:842.30px;font-size:28px;font-weight:400;color:#474747;letter-spacing:-0.692px;">June 24, 2025</span>
<span class="t" style="left:1016.30px;top:842.30px;font-size:28px;font-weight:400;color:#474747;letter-spacing:0.722px;">0</span>
<span class="t" style="left:1421.20px;top:842.30px;font-size:28px;font-weight:400;color:#474747;letter-spacing:-0.435px;">Admin</span>
<span class="t" style="left:1826.50px;top:842.30px;font-size:28px;font-weight:400;color:#474747;letter-spacing:0.594px;">762726</span>
<span class="t" style="left:2231.00px;top:842.30px;font-size:28px;font-weight:400;color:#474747;letter-spacing:-0.590px;width:370.00px;overflow:hidden;white-space:nowrap;">Monthly Newsletter - December Edition</span>
<span class="t" style="left:2937.60px;top:842.30px;font-size:28px;font-weight:400;color:#474747;letter-spacing:-1.534px;">0%</span>
<span class="t" style="left:3362.70px;top:842.30px;font-size:28px;font-weight:400;color:#474747;letter-spacing:0.722px;width:12.30px;overflow:hidden;white-space:nowrap;">0</span>
<div style="position:absolute;left:580px;top:904px;width:2795px;height:2px;background:#efefef;"></div>
<span class="t" style="left:612.80px;top:942.30px;font-size:28px;font-weight:400;color:#474747;letter-spacing:-0.692px;">June 24, 2025</span>
<span class="t" style="left:1016.30px;top:942.30px;font-size:28px;font-weight:400;color:#474747;letter-spacing:0.722px;">0</span>
<span class="t" style="left:1421.20px;top:942.30px;font-size:28px;font-weight:400;color:#474747;letter-spacing:-0.435px;">Admin</span>
<span class="t" style="left:1826.50px;top:942.30px;font-size:28px;font-weight:400;color:#474747;letter-spacing:0.594px;">553672</span>
<span class="t" style="left:2231.00px;top:942.30px;font-size:28px;font-weight:400;color:#474747;letter-spacing:-0.584px;width:370.00px;overflow:hidden;white-space:nowrap;">Monthly Newsletter - September Edition</span>
<span class="t" style="left:2937.60px;top:942.30px;font-size:28px;font-weight:400;color:#474747;letter-spacing:-1.534px;">0%</span>
<span class="t" style="left:3362.70px;top:942.30px;font-size:28px;font-weight:400;color:#474747;letter-spacing:0.722px;width:12.30px;overflow:hidden;white-space:nowrap;">0</span>
<div style="position:absolute;left:580px;top:1004px;width:2795px;height:2px;background:#efefef;"></div>
<span class="t" style="left:612.80px;top:1042.30px;font-size:28px;font-weight:400;color:#474747;letter-spacing:-0.692px;">June 24, 2025</span>
<span class="t" style="left:1016.30px;top:1042.30px;font-size:28px;font-weight:400;color:#474747;letter-spacing:0.722px;">0</span>
<span class="t" style="left:1421.20px;top:1042.30px;font-size:28px;font-weight:400;color:#474747;letter-spacing:-0.435px;">Admin</span>
<span class="t" style="left:1826.50px;top:1042.30px;font-size:28px;font-weight:400;color:#474747;letter-spacing:0.594px;">652370</span>
<span class="t" style="left:2231.00px;top:1042.30px;font-size:28px;font-weight:400;color:#474747;letter-spacing:-0.662px;width:370.00px;overflow:hidden;white-space:nowrap;">New Mobile App Announcement</span>
<span class="t" style="left:2937.60px;top:1042.30px;font-size:28px;font-weight:400;color:#474747;letter-spacing:-1.534px;">0%</span>
<span class="t" style="left:3362.70px;top:1042.30px;font-size:28px;font-weight:400;color:#474747;letter-spacing:0.722px;width:12.30px;overflow:hidden;white-space:nowrap;">0</span>
<div style="position:absolute;left:580px;top:1104px;width:2795px;height:2px;background:#efefef;"></div>
<span class="t" style="left:612.80px;top:1142.30px;font-size:28px;font-weight:400;color:#474747;letter-spacing:-0.692px;">June 24, 2025</span>
<span class="t" style="left:1016.30px;top:1142.30px;font-size:28px;font-weight:400;color:#474747;letter-spacing:0.722px;">0</span>
<span class="t" style="left:1421.20px;top:1142.30px;font-size:28px;font-weight:400;color:#474747;letter-spacing:-0.435px;">Admin</span>
<span class="t" style="left:1826.50px;top:1142.30px;font-size:28px;font-weight:400;color:#474747;letter-spacing:0.594px;">564779</span>
<span class="t" style="left:2231.00px;top:1142.30px;font-size:28px;font-weight:400;color:#474747;letter-spacing:-0.630px;width:370.00px;overflow:hidden;white-space:nowrap;">Abandoned Cart Reminder - Admin June</span>
<span class="t" style="left:2937.60px;top:1142.30px;font-size:28px;font-weight:400;color:#474747;letter-spacing:-1.534px;">0%</span>
<span class="t" style="left:3362.70px;top:1142.30px;font-size:28px;font-weight:400;color:#474747;letter-spacing:0.722px;width:12.30px;overflow:hidden;white-space:nowrap;">0</span>
<div style="position:absolute;left:580px;top:1204px;width:2795px;height:2px;background:#efefef;"></div>
<span class="t" style="left:612.80px;top:1242.30px;font-size:28px;font-weight:400;color:#474747;letter-spacing:-0.692px;">June 24, 2025</span>
<span class="t" style="left:1016.30px;top:1242.30px;font-size:28px;font-weight:400;color:#474747;letter-spacing:0.722px;">0</span>
<span class="t" style="left:1421.20px;top:1242.30px;font-size:28px;font-weight:400;color:#474747;letter-spacing:-0.435px;">Admin</span>
<span class="t" style="left:1826.50px;top:1242.30px;font-size:28px;font-weight:400;color:#474747;letter-spacing:0.594px;">762489</span>
<span class="t" style="left:2231.00px;top:1242.30px;font-size:28px;font-weight:400;color:#474747;letter-spacing:-0.642px;width:370.00px;overflow:hidden;white-space:nowrap;">Premium Customer Update - Admin</span>
<span class="t" style="left:2937.60px;top:1242.30px;font-size:28px;font-weight:400;color:#474747;letter-spacing:-1.534px;">0%</span>
<span class="t" style="left:3362.70px;top:1242.30px;font-size:28px;font-weight:400;color:#474747;letter-spacing:0.722px;width:12.30px;overflow:hidden;white-space:nowrap;">0</span>
<div style="position:absolute;left:580px;top:1304px;width:2795px;height:2px;background:#efefef;"></div>
<span class="t" style="left:612.80px;top:1342.30px;font-size:28px;font-weight:400;color:#474747;letter-spacing:-0.692px;">June 24, 2025</span>
<span class="t" style="left:1016.30px;top:1342.30px;font-size:28px;font-weight:400;color:#474747;letter-spacing:0.722px;">0</span>
<span class="t" style="left:1421.20px;top:1342.30px;font-size:28px;font-weight:400;color:#474747;letter-spacing:-0.435px;">Admin</span>
<span class="t" style="left:1826.50px;top:1342.30px;font-size:28px;font-weight:400;color:#474747;letter-spacing:0.594px;">597558</span>
<span class="t" style="left:2231.00px;top:1342.30px;font-size:28px;font-weight:400;color:#474747;letter-spacing:-0.626px;width:370.00px;overflow:hidden;white-space:nowrap;">Q1 2025 Business Review - Admin</span>
<span class="t" style="left:2937.60px;top:1342.30px;font-size:28px;font-weight:400;color:#474747;letter-spacing:-1.534px;">0%</span>
<span class="t" style="left:3362.70px;top:1342.30px;font-size:28px;font-weight:400;color:#474747;letter-spacing:0.722px;width:12.30px;overflow:hidden;white-space:nowrap;">0</span>
<div style="position:absolute;left:580px;top:1404px;width:2795px;height:2px;background:#efefef;"></div>
<span class="t" style="left:612.80px;top:1442.30px;font-size:28px;font-weight:400;color:#474747;letter-spacing:-0.692px;">June 24, 2025</span>
<span class="t" style="left:1016.30px;top:1442.30px;font-size:28px;font-weight:400;color:#474747;letter-spacing:0.722px;">0</span>
<span class="t" style="left:1421.20px;top:1442.30px;font-size:28px;font-weight:400;color:#474747;letter-spacing:-0.435px;">Admin</span>
<span class="t" style="left:1826.50px;top:1442.30px;font-size:28px;font-weight:400;color:#474747;letter-spacing:0.594px;">729786</span>
<span class="t" style="left:2231.00px;top:1442.30px;font-size:28px;font-weight:400;color:#474747;letter-spacing:-0.630px;width:370.00px;overflow:hidden;white-space:nowrap;">Abandoned Cart Reminder - Admin June</span>
<span class="t" style="left:2937.60px;top:1442.30px;font-size:28px;font-weight:400;color:#474747;letter-spacing:-1.534px;">0%</span>
<span class="t" style="left:3362.70px;top:1442.30px;font-size:28px;font-weight:400;color:#474747;letter-spacing:0.722px;width:12.30px;overflow:hidden;white-space:nowrap;">0</span>
<div style="position:absolute;left:580px;top:1504px;width:2795px;height:2px;background:#efefef;"></div>
<span class="t" style="left:612.80px;top:1542.30px;font-size:28px;font-weight:400;color:#474747;letter-spacing:-0.692px;">June 24, 2025</span>
<span class="t" style="left:1016.30px;top:1542.30px;font-size:28px;font-weight:400;color:#474747;letter-spacing:0.722px;">0</span>
<span class="t" style="left:1421.20px;top:1542.30px;font-size:28px;font-weight:400;color:#474747;letter-spacing:-0.435px;">Admin</span>
<span class="t" style="left:1826.50px;top:1542.30px;font-size:28px;font-weight:400;color:#474747;letter-spacing:0.594px;">509760</span>
<span class="t" style="left:2231.00px;top:1542.30px;font-size:28px;font-weight:400;color:#474747;letter-spacing:-0.630px;width:370.00px;overflow:hidden;white-space:nowrap;">Abandoned Cart Reminder - Admin June</span>
<span class="t" style="left:2937.60px;top:1542.30px;font-size:28px;font-weight:400;color:#474747;letter-spacing:-1.534px;">0%</span>
<span class="t" style="left:3362.70px;top:1542.30px;font-size:28px;font-weight:400;color:#474747;letter-spacing:0.722px;width:12.30px;overflow:hidden;white-space:nowrap;">0</span>
<div style="position:absolute;left:580px;top:1604px;width:2795px;height:2px;background:#efefef;"></div>
<div style="position:absolute;left:3374px;top:405px;width:30px;height:1230px;background:#fafafa;border-left:2px solid #ececec;box-sizing:border-box;"></div>
<div style="position:absolute;left:3382px;top:406px;width:15px;height:20px;background:#c1c1c1;border-radius:8px;"></div>
<div style="position:absolute;left:580px;top:1635px;width:2823px;height:28px;background:#fafafa;border-top:2px solid #ececec;box-sizing:border-box;border-radius:0 0 12px 12px;"></div>
<div style="position:absolute;left:983px;top:1636px;width:2px;height:28px;background:#e3e3e3;"></div>
<div style="position:absolute;left:991px;top:1641px;width:778px;height:17px;background:#c1c1c1;border-radius:9px;"></div>
<div style="position:absolute;left:3374px;top:1635px;width:29px;height:28px;background:#ffffff;border-radius:0 0 12px 0;"></div>
<svg style="position:absolute;left:478px;top:370px;filter:blur(4px)" width="40" height="60" viewBox="-10 -10 40 60"><path d="M14 3 L3.5 17 Q1.5 20 3.5 23 L14 37 Z" fill="rgba(40,60,90,0.16)"/></svg>
<div style="position:absolute;left:502px;top:368px;width:960px;height:884px;background:#fff;border-radius:18px;box-shadow:0 6px 18px rgba(0,0,0,0.08),0 1px 2px rgba(0,0,0,0.03);"></div>
<svg style="position:absolute;left:488px;top:380px" width="20" height="40" viewBox="0 0 20 40"><path d="M14 3 Q14 4 13 5 L3.5 17 Q1.5 20 3.5 23 L13 34 Q14 35 14 37 L14 40 L20 40 L20 0 L14 0 Z" fill="#fff"/></svg>
<div style="position:absolute;left:558px;top:425px;width:847px;height:62px;background:#fff;border:2px solid #d8d8d8;border-radius:10px;box-sizing:border-box;"></div>
<svg style="position:absolute;left:576px;top:441px;" width="30" height="30" viewBox="0 0 24 24" fill="none" stroke="#808080" stroke-width="2.2" stroke-linecap="round" stroke-linejoin="round"><circle cx="11.5" cy="11.5" r="8"/><path d="M17.5 17.5l5 5"/></svg>
<div style="position:absolute;left:1294px;top:440px;width:48px;height:32px;background:#ebebeb;border-radius:16px;"></div>
<span class="t" style="left:1312.44px;top:446.57px;font-size:20px;font-weight:400;color:#7b8594;letter-spacing:0.000px;">0</span>
<svg style="position:absolute;left:1366px;top:448px;" width="16" height="16" viewBox="0 0 16 16" fill="none" stroke="#a9adb3" stroke-width="1.6" stroke-linecap="round" stroke-linejoin="round"><path d="M2 2l12 12M14 2l-12 12"/></svg>
<div style="position:absolute;left:558px;top:527px;width:32px;height:32px;background:#fff;border:2px solid #d6d6d6;border-radius:5px;box-sizing:border-box;"></div>
<span class="t" style="left:606.00px;top:531.68px;font-size:24px;font-weight:700;color:#6f8288;letter-spacing:-0.756px;">Select All</span>
<div style="position:absolute;left:526px;top:581px;width:911px;height:2px;background:#ececec;"></div>
<div style="position:absolute;left:1408px;top:600px;width:30px;height:628px;background:#fafafa;border-left:2px solid #ececec;border-right:2px solid #ececec;box-sizing:border-box;"></div>
<div style="position:absolute;left:1416px;top:606px;width:15px;height:48px;background:#c1c1c1;border-radius:8px;"></div>
<div style="position:absolute;left:558px;top:647px;width:32px;height:32px;background:#336fd3;border-radius:5px;"></div>
<svg style="position:absolute;left:558px;top:647px;" width="32" height="32" viewBox="0 0 32 32" fill="none" stroke="#ffffff" stroke-width="2.6" stroke-linecap="round" stroke-linejoin="round"><path d="M7 16.5l6 6l12-12"/></svg>
<span class="t" style="left:606.00px;top:627.68px;font-size:24px;font-weight:700;color:#1e2736;letter-spacing:-0.865px;">Average Click Rate</span>
<span class="t" style="left:606.00px;top:660.67px;font-size:20px;font-weight:400;color:#6f8288;letter-spacing:-0.416px;">The average rate at which a message was clicked. Computed as total clicks divided by</span>
<span class="t" style="left:606.00px;top:684.67px;font-size:20px;font-weight:400;color:#6f8288;letter-spacing:-0.459px;">total clicked messages.</span>
<div style="position:absolute;left:526px;top:726px;width:882px;height:2px;background:#ececec;"></div>
<div style="position:absolute;left:558px;top:775px;width:32px;height:32px;background:#336fd3;border-radius:5px;"></div>
<svg style="position:absolute;left:558px;top:775px;" width="32" height="32" viewBox="0 0 32 32" fill="none" stroke="#ffffff" stroke-width="2.6" stroke-linecap="round" stroke-linejoin="round"><path d="M7 16.5l6 6l12-12"/></svg>
<span class="t" style="left:606.00px;top:767.18px;font-size:24px;font-weight:700;color:#1e2736;letter-spacing:-1.058px;">Average Clicks</span>
<span class="t" style="left:606.00px;top:800.17px;font-size:20px;font-weight:400;color:#6f8288;letter-spacing:-0.444px;">The average number of times individuals clicked a message.&quot;</span>
<div style="position:absolute;left:526px;top:854px;width:882px;height:2px;background:#ececec;"></div>
<div style="position:absolute;left:558px;top:903px;width:32px;height:32px;background:#336fd3;border-radius:5px;"></div>
<svg style="position:absolute;left:558px;top:903px;" width="32" height="32" viewBox="0 0 32 32" fill="none" stroke="#ffffff" stroke-width="2.6" stroke-linecap="round" stroke-linejoin="round"><path d="M7 16.5l6 6l12-12"/></svg>
<span class="t" style="left:606.00px;top:883.68px;font-size:24px;font-weight:700;color:#1e2736;letter-spacing:-0.814px;">Average Open Rate</span>
<span class="t" style="left:606.00px;top:916.67px;font-size:20px;font-weight:400;color:#6f8288;letter-spacing:-0.442px;">The average rate at which a message was opened. Computed as total opens divided by</span>
<span class="t" style="left:606.00px;top:940.67px;font-size:20px;font-weight:400;color:#6f8288;letter-spacing:-0.499px;">total opened messages.&quot;</span>
<div style="position:absolute;left:526px;top:982px;width:882px;height:2px;background:#ececec;"></div>
<div style="position:absolute;left:558px;top:1031px;width:32px;height:32px;background:#336fd3;border-radius:5px;"></div>
<svg style="position:absolute;left:558px;top:1031px;" width="32" height="32" viewBox="0 0 32 32" fill="none" stroke="#ffffff" stroke-width="2.6" stroke-linecap="round" stroke-linejoin="round"><path d="M7 16.5l6 6l12-12"/></svg>
<span class="t" style="left:606.00px;top:1023.18px;font-size:24px;font-weight:700;color:#1e2736;letter-spacing:-1.014px;">Average Opens</span>
<span class="t" style="left:606.00px;top:1056.17px;font-size:20px;font-weight:400;color:#6f8288;letter-spacing:-0.450px;">The average number of times individuals opened a message.</span>
<div style="position:absolute;left:526px;top:1110px;width:882px;height:2px;background:#ececec;"></div>
<div style="position:absolute;left:558px;top:1159px;width:32px;height:32px;background:#336fd3;border-radius:5px;"></div>
<svg style="position:absolute;left:558px;top:1159px;" width="32" height="32" viewBox="0 0 32 32" fill="none" stroke="#ffffff" stroke-width="2.6" stroke-linecap="round" stroke-linejoin="round"><path d="M7 16.5l6 6l12-12"/></svg>
<span class="t" style="left:606.00px;top:1139.68px;font-size:24px;font-weight:700;color:#1e2736;letter-spacing:-1.073px;">Bounce Rate</span>
<span class="t" style="left:606.00px;top:1172.67px;font-size:20px;font-weight:400;color:#6f8288;letter-spacing:-0.233px;">The rate at which ZMP received a response from the receiving ISP stating that the</span>
<span class="t" style="left:606.00px;top:1196.67px;font-size:20px;font-weight:400;color:#6f8288;letter-spacing:-0.411px;">message was undeliverable. Computed as bounces (hard + soft) divided by sent.</span>
<svg style="position:absolute;left:3430px;top:1690px" width="26" height="26" viewBox="0 0 26 26"><path d="M26 0 V26 H0 A26 26 0 0 0 26 0Z" fill="#8cb33a"/></svg>
</body></html>
